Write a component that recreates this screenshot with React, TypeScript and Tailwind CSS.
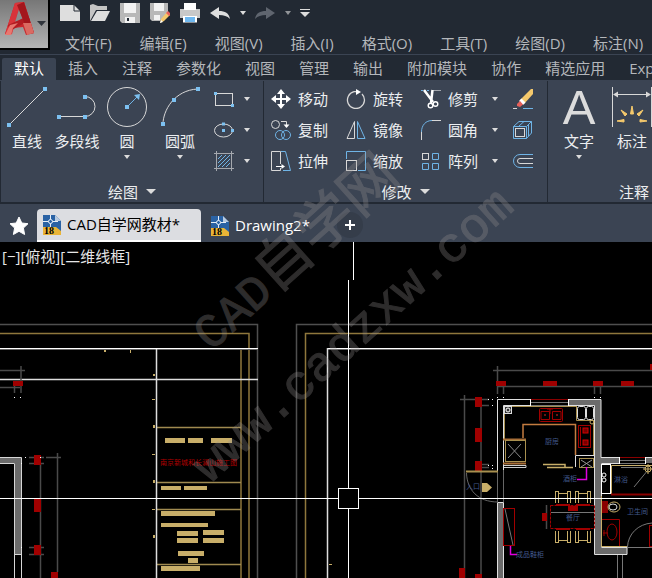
import React from 'react';

const menus = ['文件(F)', '编辑(E)', '视图(V)', '插入(I)', '格式(O)', '工具(T)', '绘图(D)', '标注(N)'];
const ribbonTabs = ['默认', '插入', '注释', '参数化', '视图', '管理', '输出', '附加模块', '协作', '精选应用', 'Express Tools'];

const GRAY = '#d8d8d8';
const BLUE = '#6fb4e6';

interface IconProps {
  size?: 20 | 40;
  children: React.ReactNode;
}

const Icon: React.FC<IconProps> = ({ size = 20, children }) => (
  <svg
    className={size === 40 ? 'w-10 h-10 shrink-0' : 'w-5 h-5 shrink-0'}
    viewBox={size === 40 ? '0 0 40 40' : '0 0 20 20'}
    fill="none"
    stroke={GRAY}
    aria-hidden="true"
  >
    {children}
  </svg>
);

const Caret: React.FC<{ large?: boolean }> = ({ large }) => (
  <svg className={large ? 'w-[10px] h-[5px] shrink-0' : 'w-[6px] h-[4px] shrink-0'} viewBox="0 0 10 6" preserveAspectRatio="none" aria-hidden="true">
    <path d="M0 0H10L5 6Z" fill="#dcdcdc" />
  </svg>
);

// Small square grip used on the drawing icons
const Grip: React.FC<{ x: number; y: number; s?: number }> = ({ x, y, s = 4 }) => (
  <rect x={x - s / 2} y={y - s / 2} width={s} height={s} fill="#7cc0f0" stroke="none" />
);

const icons = {
  line: (
    <Icon size={40}>
      <path d="M2 38L38 2" />
      <Grip x={2} y={38} />
      <Grip x={38} y={2} />
    </Icon>
  ),
  polyline: (
    <Icon size={40}>
      <path d="M2 29.5H28A10 10 0 0 0 28 9.5" />
      <Grip x={2} y={30} />
      <Grip x={28} y={30} />
      <Grip x={28} y={10} />
    </Icon>
  ),
  circle: (
    <Icon size={40}>
      <circle cx="20" cy="20" r="19.5" />
      <path d="M20 20L30 10" stroke={BLUE} />
      <path d="M33 7L32 13L27 8Z" fill="#7cc0f0" stroke="none" />
      <Grip x={20} y={20} />
    </Icon>
  ),
  arc: (
    <Icon size={40}>
      <path d="M3 37C3 24 14 3 38 2" />
      <Grip x={3} y={37} />
      <Grip x={14} y={13} />
      <Grip x={38} y={2} />
    </Icon>
  ),
  rect: (
    <Icon>
      <rect x="1.5" y="4.5" width="17" height="12" />
      <Grip x={1.5} y={4.5} s={3} />
      <Grip x={18.5} y={16.5} s={3} />
    </Icon>
  ),
  ellipse: (
    <Icon>
      <ellipse cx="9.5" cy="10.5" rx="9" ry="6.5" />
      <Grip x={9.5} y={10.5} s={3} />
      <Grip x={9.5} y={4} s={3} />
      <Grip x={18.5} y={10.5} s={3} />
    </Icon>
  ),
  hatch: (
    <Icon>
      <path d="M2.5 0V20M17.5 0V20M0 2.5H20M0 17.5H20" stroke="#a4a8ae" />
      <path d="M4 8L8 4M4 12L12 4M4 16L16 4M8 16L16 8M12 16L16 12" stroke={BLUE} />
    </Icon>
  ),
  move: (
    <Icon>
      <path d="M10 3V17M3 10H17" stroke="#fff" strokeWidth="2" />
      <path d="M10 0L14 5H6ZM10 20L6 15H14ZM0 10L5 6V14ZM20 10L15 14V6Z" fill="#fff" stroke="none" />
    </Icon>
  ),
  rotate: (
    <Icon>
      <path d="M16 5A8.5 8.5 0 1 1 8 2.7H12" strokeWidth="1.3" />
      <path d="M10 0L15 3L10 6Z" fill="#fff" stroke="none" />
    </Icon>
  ),
  trim: (
    <Icon>
      <path d="M0 1.5H8" stroke={BLUE} strokeDasharray="2 1" />
      <path d="M12 1.5H20" stroke="#a4a8ae" />
      <path d="M3 1L12 13M11.500 1L10 14" stroke="#fff" strokeWidth="2.500" />
      <circle cx="9.500" cy="16.500" r="2.3" stroke="#fff" strokeWidth="1.4" />
      <circle cx="14.500" cy="15" r="2.3" stroke="#fff" strokeWidth="1.4" />
    </Icon>
  ),
  copy: (
    <Icon>
      <circle cx="4.5" cy="4.500" r="4" />
      <path d="M10 1.500H15.500V5" />
      <path d="M12.500 4.500H18.500L15.500 8Z" fill="#fff" stroke="none" />
      <circle cx="9" cy="15" r="4.500" stroke={BLUE} />
      <circle cx="15" cy="15" r="4.500" stroke={BLUE} />
    </Icon>
  ),
  mirror: (
    <Icon>
      <path d="M8.500 1.500V18.500H1Z" />
      <path d="M11.500 1.500V18.500H19Z" stroke={BLUE} />
    </Icon>
  ),
  fillet: (
    <Icon>
      <path d="M.5 20V12M11 .5H20" />
      <path d="M.5 12C.5 5 5 .5 11 .5" stroke={BLUE} />
    </Icon>
  ),
  stretch: (
    <Icon>
      <path d="M9.500 13V.5H.5V19.500H9.500V17" />
      <path d="M10 .5H14.500L19.500 19.500H12" stroke={BLUE} />
      <path d="M5 15.500H12" stroke="#fff" />
      <path d="M10.500 13L14 15.500L10.500 18Z" fill="#fff" stroke="none" />
    </Icon>
  ),
  scale: (
    <Icon>
      <path d="M.5 8V.5H19.500V19.500H12" stroke={BLUE} />
      <rect x=".5" y="9.500" width="10" height="10" />
    </Icon>
  ),
  array: (
    <Icon>
      <rect x="1.500" y="2.500" width="6" height="6" />
      <path d="M11.500 2.500H17.500V8.500H11.500ZM1.500 12.500H7.500V18.500H1.500ZM11.500 12.500H17.500V18.500H11.500Z" stroke={BLUE} />
    </Icon>
  ),
  erase: (
    <Icon>
      <path d="M0 19.500H4" />
      <path d="M10 19.500H20" stroke={BLUE} />
      <path d="M18 0H20V5L11 15L7 11Z" fill="#f5c96c" stroke="none" />
      <path d="M8.500 9.500L12.500 13.500L10 16L6 12Z" fill="#fff" stroke="none" />
      <path d="M7 12L10 15.500L7 18L4 17V15Z" fill="#e8605a" stroke="none" />
    </Icon>
  ),
  box: (
    <Icon>
      <path d="M.5 6.500L6 1.500H18.500V13L13.500 18.500V6.500L18.500 1.500M.5 6.500H13.500M.5 6.500V18.500H13.500M11 1.500L6 6M15.500 5V16" stroke={BLUE} />
      <rect x="2.500" y="8.500" width="9" height="8" />
    </Icon>
  ),
  offset: (
    <Icon>
      <path d="M20 3.500H7A6.500 6.500 0 0 0 7 16.500H20" stroke={BLUE} />
      <path d="M20 7.500H7A2.500 2.500 0 0 0 7 12.500H20" />
    </Icon>
  ),
  text: (
    <Icon size={40}>
      <text x="20" y="37" textAnchor="middle" fontSize="49" fontFamily="Liberation Sans, sans-serif" fill="#dcdcdc" stroke="none">A</text>
    </Icon>
  ),
  dimension: (
    <Icon size={40}>
      <path d="M.5 0V40M39.500 0V40M2 7.500H38" />
      <path d="M1 7.500L6 4.500V10.500ZM39 7.500L34 4.500V10.500Z" fill={GRAY} stroke="none" />
      <path d="M18.500 27L20 19L21.500 27ZM13 29L9 23L15 27ZM27 29L31 23L25 27ZM12 35L5 34L12 32.500ZM28 35L35 34L28 32.500Z" fill="#f5c96c" stroke="#f5c96c" />
    </Icon>
  ),
};

const Flyout: React.FC<{ label: string }> = ({ label }) => (
  <button type="button" aria-label={label} className="flex items-center justify-center w-3 h-5">
    <Caret />
  </button>
);

interface BigToolProps {
  label: string;
  icon: React.ReactNode;
  caret?: boolean;
  wide?: boolean;
}

const BigTool: React.FC<BigToolProps> = ({ label, icon, caret, wide }) => (
  <button type="button" className={`flex flex-col items-center shrink-0 pt-[6px] hover:bg-white/5 ${wide ? 'w-[56px]' : 'w-[50px]'}`}>
    {icon}
    <span className="mt-1 leading-5">{label}</span>
    {caret && (
      <span className="flex mt-1">
        <Caret />
      </span>
    )}
  </button>
);

const SmallTool: React.FC<{ label: string; icon: React.ReactNode }> = ({ label, icon }) => (
  <button type="button" className="flex items-center gap-[7px] h-[31px] leading-5 hover:bg-white/5">
    {icon}
    <span>{label}</span>
  </button>
);

const Panel: React.FC<{ title: string; className: string; children: React.ReactNode }> = ({ title, className, children }) => (
  <section aria-label={title} className={`flex flex-col shrink-0 bg-[#3b4453] ${className}`}>
    <div className="flex h-[100px]">{children}</div>
    <button type="button" className="flex items-center justify-center gap-2 h-[21px] leading-5">
      {title}
      <Caret large />
    </button>
  </section>
);

const modifyColumns = [
  [
    { label: '移动', icon: icons.move },
    { label: '复制', icon: icons.copy },
    { label: '拉伸', icon: icons.stretch },
  ],
  [
    { label: '旋转', icon: icons.rotate },
    { label: '镜像', icon: icons.mirror },
    { label: '缩放', icon: icons.scale },
  ],
  [
    { label: '修剪', icon: icons.trim },
    { label: '圆角', icon: icons.fillet },
    { label: '阵列', icon: icons.array },
  ],
];

const AppButton: React.FC = () => (
  <button
    type="button"
    aria-label="AutoCAD"
    className="flex items-center w-[50px] h-[50px] shrink-0 border-r-2 border-b-2 border-black bg-linear-to-b from-[#777] to-[#b4b4b4]"
  >
    <svg className="w-full h-full" viewBox="0 0 48 48" aria-hidden="true">
      <path d="M5 34L15 3L24 2L34 33L26 35L23 27L13 28L11 35Z" fill="#c9262c" />
      <path d="M15 3L24 2L29 18L24 19L19 8L12 34L5 34Z" fill="#d9343a" />
      <path d="M19 9L23 20L15 22Z" fill="#8d8d8d" />
      <path d="M8 25L28 16L30 20L10 31Z" fill="#b21c22" />
      <path d="M24 2L34 33L29 34L17 5Z" fill="#a3161c" />
      <path d="M10 25L18 23L13 28L11 35H5Z" fill="#e8776f" />
      <path d="M23 23L31 23L34 33L27 35Z" fill="#da6a62" />
      <path d="M37 21H46L41.500 26Z" fill="#30343b" />
    </svg>
  </button>
);

const quickTools = [
  {
    label: '新建',
    art: (
      <>
        <path d="M0 2H14L20 8V18H0Z" fill="#dedede" stroke="none" />
        <path d="M14 2V8H20" stroke="#222933" />
      </>
    ),
  },
  {
    label: '打开',
    art: (
      <>
        <path d="M0 18V2L3 1L8 3H17V7H6Z" fill="#c4c4c4" stroke="none" />
        <path d="M1 18L7 8H20L15 18Z" fill="#dedede" stroke="none" />
      </>
    ),
  },
  {
    label: '保存',
    art: (
      <>
        <path d="M0 0H20V20H2L0 18Z" fill="#b8b8b8" stroke="none" />
        <path d="M4 0H16V10H4ZM5 14H15V20H5Z" fill="#f2f2f2" stroke="none" />
        <path d="M7 15H9V18H7Z" fill="#222933" stroke="none" />
      </>
    ),
  },
  {
    label: '另存为',
    art: (
      <>
        <path d="M0 0H18V11L10 18H2L0 16Z" fill="#b8b8b8" stroke="none" />
        <path d="M4 0H14V8H4ZM4 12H10V17H4Z" fill="#f2f2f2" stroke="none" />
        <path d="M10 20L11 16L17 9L20 12L14 18Z" fill="#f5c96c" stroke="none" />
        <path d="M16 10L18 8L21 11L19 13Z" fill="#e8605a" stroke="none" />
        <path d="M10 20L11 17L13 19Z" fill="#fff" stroke="none" />
      </>
    ),
  },
  {
    label: '打印',
    art: (
      <>
        <path d="M4 0H16V7H4Z" fill="#fff" stroke="none" />
        <path d="M0 6H20V15H0Z" fill="#c8c8c8" stroke="none" />
        <path d="M4 4H16V7H4Z" fill="#fff" stroke="none" />
        <path d="M3 13H17V19.500H3Z" fill="#fff" stroke="none" />
        <path d="M5 14H15V19H5Z" fill="#6fb8f0" stroke="none" />
      </>
    ),
  },
  { label: '放弃', art: <path d="M0 10L9 4V8C15 8 19 10 20 16C17 13 14 12 9 12V16Z" fill="#dedede" stroke="none" /> },
];

const QuickAccess: React.FC = () => (
  <div className="flex items-center gap-[10px] h-[32px] pl-[10px] pb-[6px]">
    {quickTools.map((tool) => (
      <button key={tool.label} type="button" aria-label={tool.label}>
        <Icon>{tool.art}</Icon>
      </button>
    ))}
    <button type="button" aria-label="放弃列表" className="w-[5px]">
      <Caret />
    </button>
    <button type="button" aria-label="重做">
      <Icon>
        <path d="M20 10L11 4V8C5 8 1 10 0 16C3 13 6 12 11 12V16Z" fill="#5f656f" stroke="none" />
      </Icon>
    </button>
    <button type="button" aria-label="重做列表" className="w-[5px] opacity-60">
      <Caret />
    </button>
    <button type="button" aria-label="自定义快速访问工具栏" className="flex flex-col items-center gap-[2px] w-[10px]">
      <span className="w-[10px] h-px bg-[#dcdcdc]" />
      <Caret large />
    </button>
  </div>
);

const DwgIcon: React.FC = () => (
  <svg className="w-5 h-5 shrink-0" viewBox="0 0 20 20" aria-hidden="true">
    <path d="M1 0H13L19 6V20H1Z" fill="#2a62a4" />
    <path d="M13 0V6H19Z" fill="#b9cbe0" />
    <path d="M1 12H14L19 16V20H1Z" fill="#eab436" />
    <path d="M8.500 0V12M1 6.500H16" stroke="#e6eef8" />
    <circle cx="8.500" cy="6.500" r="2" fill="#2a62a4" stroke="#e6eef8" />
    <text x="2" y="19" fontSize="10" fontWeight="bold" fontFamily="Liberation Serif, serif" fill="#000">18</text>
  </svg>
);

const FileTabs: React.FC = () => (
  <nav aria-label="文件" className="flex items-end h-[38px] bg-[#3b4453] text-white">
    <button type="button" aria-label="开始" className="flex items-center justify-center w-[37px] h-[33px]">
      <svg className="w-5 h-5" viewBox="0 0 20 20" aria-hidden="true">
        <path d="M10 1L12.800 7L19 7.700L14.400 12L15.600 18.500L10 15.300L4.400 18.500L5.600 12L1 7.700L7.200 7Z" fill="#fff" stroke="#fff" strokeLinejoin="round" />
      </svg>
    </button>
    <button type="button" className="flex items-center gap-[5px] w-[164px] h-[33px] pl-[5px] rounded-t-sm border-b-2 border-white bg-[#dcdde1] text-black">
      <DwgIcon />
      CAD自学网教材*
    </button>
    <button type="button" className="flex items-center gap-[5px] w-[132px] h-[33px] pl-[9px]">
      <DwgIcon />
      Drawing2*
    </button>
    <button type="button" aria-label="新图形" className="flex items-center justify-center w-[26px] h-[26px] mb-1 ml-1 rounded-full bg-[#353d4a]">
      <svg className="w-[10px] h-[10px]" viewBox="0 0 10 10" aria-hidden="true">
        <path d="M5 0V10M0 5H10" stroke="#fff" strokeWidth="2" />
      </svg>
    </button>
  </nav>
);

const titleBlocks = [
  [165, 438, 20, 5], [188, 438, 15, 5], [211, 438, 21, 5],
  [161, 486, 20, 4], [184, 486, 23, 4],
  [161, 511, 54, 5], [161, 523, 47, 4],
  [177, 531, 21, 5], [203, 530, 21, 5], [177, 538, 21, 5], [203, 538, 21, 5],
  [178, 551, 26, 5], [188, 558, 10, 5], [161, 566, 39, 5],
  [153, 374, 2, 2], [152, 399, 3, 1], [153, 425, 2, 3], [152, 454, 3, 1],
  [153, 480, 2, 3], [152, 509, 3, 1], [153, 535, 2, 3], [104, 350, 2, 2], [130, 350, 1, 3], [329, 564, 3, 1],
];

const dimensionMarks = [
  [13, 381, 10, 5], [34, 455, 7, 10], [34, 499, 7, 13], [34, 545, 7, 10], [51, 572, 7, 6],
  [496, 381, 10, 5], [543, 381, 14, 5], [593, 381, 10, 5], [621, 381, 13, 5], [650, 364, 2, 6],
  [475, 397, 7, 10], [475, 428, 7, 14], [475, 461, 7, 10],
  [459, 568, 6, 10], [475, 574, 7, 4], [568, 506, 10, 5], [542, 513, 5, 8],
];

const dots = [
  [14, 397], [20, 397], [25, 457], [21, 463], [40, 457], [21, 547],
  [488, 399], [492, 399], [492, 405], [488, 465], [492, 465], [492, 468], [497, 397], [503, 397], [594, 397], [600, 397],
];

const Chair: React.FC<{ x: number; y: number; flip?: boolean }> = ({ x, y, flip }) => (
  <g transform={flip ? `translate(${x} ${y + 14}) scale(1 -1)` : `translate(${x} ${y})`}>
    <path d="M.5 12V1M3.500 12V1M12.500 12V1M15.500 12V1M0 .5H4M12 .5H16M3 2.500H13" stroke="#c8ae69" />
    <path d="M1 14H15" stroke="#a00000" strokeWidth="2" />
  </g>
);

const Drawing: React.FC = () => (
  <svg className="absolute inset-0 w-full h-full" viewBox="0 242 652 336" preserveAspectRatio="xMinYMin slice" fill="none" aria-hidden="true">
    {/* sheet frames */}
    <path d="M0 324.500H257.500V578M296.500 578V324.500H652" stroke="#4f4f4f" strokeWidth="1.500" />
    <path d="M0 333.500H249V578M241 350V578M305.500 578V333.500H652" stroke="#8f773c" strokeWidth="1.500" />
    <path d="M156 427.500H241M156 482.500H241M156 509.500H241M156 564.500H241" stroke="#a08a50" strokeWidth="1.500" />
    <path d="M0 348.500H258M328 348.500H652" stroke="#fff" />
    <path d="M0 349.500H258M328 349.500H652" stroke="#666" />
    <path d="M0 379.500H258" stroke="#ddd" strokeWidth="1.500" />
    <path d="M156.500 349V578M327.500 348V578" stroke="#ddd" strokeWidth="1.500" />
    {titleBlocks.map(([x, y, w, h]) => (
      <rect key={`${x}-${y}`} x={x} y={y} width={w} height={h} fill="#c8ae69" />
    ))}
    <text x="160" y="465" fontSize="7" fontFamily="Noto Sans CJK SC, sans-serif" fill="#b00000">南京新城和长澜山施工图</text>

    {/* dimension lines */}
    <g stroke="#4a4a4a" strokeWidth="1.500">
      <path d="M0 370.500H25M21 366V393M0 387.500H20M14.500 386V393M40.500 463V578M57.500 453V572M29 457.500H44M29 463.500H44M46 457.500H61M29 547.500H44M29 554.500H44" />
      <path d="M493 370.500H652M497.500 366V394M497 386.500H652M503.500 382V394M594.500 386V394M600.500 386V394" />
      <path d="M464.500 395V578M460 399.500H475M481 405V578M482 399.500H489M482 405.500H489M477 464.500H489M477 467.500H489M546.500 505V529" />
    </g>
    {dimensionMarks.map(([x, y, w, h]) => (
      <rect key={`${x}-${y}`} x={x} y={y} width={w} height={h} fill="#a00000" />
    ))}

    {/* walls */}
    <path d="M0 457H21V554H15V463H0Z" fill="#6b6b6b" />
    <path d="M0 457.500H21.500V578M0 463.500H14.500V578M15 554.500H21" stroke="#d6d6d6" />
    <path d="M568 400H601V554H595V406H568ZM595 548H627V554H595ZM498 503H503V578H498ZM601 458H619V463H601ZM645 458H652V463H645Z" fill="#6b6b6b" />
    <path d="M497.500 471V399.500H601V457.500H652M503.500 470V405.500H530M568 405.500H594.500V554.500H627V547.500H601.500V463.500H619M497.500 578V502.500H503.500V578" stroke="#e0e0e0" />
    <path d="M497.500 471V502M503.500 470V502" stroke="#666" />
    <path d="M530 399.500H568M619 457.500H645" stroke="#8a0000" />
    <path d="M531 402.500H568M531 405.500H568M619 460.500H645M619 463.500H645" stroke="#777" />
    <path d="M530.500 399V406M568.500 399V406M619.500 457V464M645.500 457V464" stroke="#fff" />
    <path d="M617.500 555V578M622.500 555V578" stroke="#777" />

    {/* kitchen */}
    <path d="M504.500 414V439M512 406.500H577M576.500 406V420.500H593.500V455" stroke="#a8904f" />
    <rect x="504.500" y="406.500" width="7" height="7" stroke="#ddd" fill="#333" />
    <circle cx="508" cy="410" r="2" stroke="#fff" />
    <rect x="539.500" y="408.500" width="23" height="13" rx="1" stroke="#a00000" />
    <path d="M541 411.500H549.500V419.500H541ZM552.500 411.500H561V419.500H552.500ZM550 408V414M547 409H553" stroke="#a00000" />
    <path d="M544 415H546M556 415H558" stroke="#d22" />
    <rect x="577.500" y="406.500" width="8" height="13" rx="2" stroke="#ddd" />
    <rect x="586.500" y="406.500" width="7" height="13" rx="2" stroke="#ddd" />
    <circle cx="592" cy="422" r="2" stroke="#c8ae69" />
    <path d="M523 438V424.500H575.500V455" stroke="#c47c40" strokeWidth="1.500" />
    <rect x="578.500" y="425.500" width="12" height="22" stroke="#a00000" />
    <rect x="583" y="428" width="5" height="5" fill="#700" stroke="#d00000" />
    <rect x="583" y="440" width="5" height="5" fill="#700" stroke="#d00000" />
    <path d="M580.500 427V446" stroke="#a00000" />
    <path d="M503 439.500H526M503 463.500H526" stroke="#a86f38" strokeWidth="2" />
    <rect x="505.500" y="440.500" width="20" height="21" stroke="#a8904f" />
    <path d="M508 444L521 458M521 444L508 458" stroke="#888" />
    <path d="M504 465.500H526V467.500H504" stroke="#ccc" />
    <path d="M543 464.500H565V467.500H547M555 467.500H573" stroke="#c8ae69" strokeWidth="1.500" />
    <path d="M575.500 467V455.500H594" stroke="#ddd" />
    <rect x="579.500" y="458.500" width="14" height="9" stroke="#a8904f" />
    <path d="M581 460L592 467M592 460L581 467" stroke="#999" />
    <path d="M577 479.500H586.500V467M510.500 546V554.500H517" stroke="#e000e0" strokeWidth="1.500" />

    {/* entrance */}
    <path d="M466 471.500H498" stroke="#a8904f" strokeWidth="2" />
    <path d="M466.500 473C467 490 478 502 498 502" stroke="#666" />
    <path d="M482 483H487L492 487.500L487 492H482Z" fill="#c8ae69" />
    <rect x="503.500" y="508.500" width="11" height="37" stroke="#a00000" />
    <path d="M505 509L513 545" stroke="#777" />

    {/* dining table */}
    <Chair x={555} y={491} />
    <Chair x={575} y={491} />
    <Chair x={555} y={529} flip />
    <Chair x={575} y={529} flip />
    <rect x="550.500" y="505.500" width="44" height="23" stroke="#a00000" strokeDasharray="3 1" />
    <path d="M551 512.500H594" stroke="#777" />

    {/* bathroom */}
    <rect x="601.500" y="464.500" width="9" height="29" stroke="#fff" />
    <circle cx="604" cy="475" r="2" stroke="#fff" />
    <circle cx="604" cy="480" r="2" stroke="#fff" />
    <path d="M611.500 494V465.500H652M601.500 496V546.500H627" stroke="#c8ae69" />
    <path d="M611 494.500H652" stroke="#8a0000" strokeWidth="2" />
    <path d="M634 487L648 470M621 467.500H646" stroke="#777" />
    <circle cx="648" cy="469" r="3" stroke="#c8ae69" />
    <path d="M643 469H652M648 464V474" stroke="#c8ae69" />
    <rect x="602" y="501" width="6" height="12" fill="#8a0000" />
    <ellipse cx="614" cy="507" rx="6" ry="5" stroke="#c8ae69" />
    <ellipse cx="613" cy="507" rx="4" ry="3" stroke="#ddd" />
    <path d="M602 519.500H619.500V546M603 533H608M604 530V536" stroke="#a00000" />
    <ellipse cx="612" cy="532" rx="5" ry="8" stroke="#a00000" />
    <path d="M627.500 547C628 534 638 524 652 523" stroke="#777" />
    <path d="M627.500 547V554M627 547.500H652" stroke="#777" />
    <rect x="649.500" y="525.500" width="3" height="21" stroke="#a00000" />

    <g fontSize="7" fontFamily="Noto Sans CJK SC, sans-serif" fill="#41588c">
      <text x="545" y="444">厨房</text>
      <text x="466" y="489">入口</text>
      <text x="563" y="481">酒柜</text>
      <text x="614" y="482">淋浴</text>
      <text x="627" y="514">卫生间</text>
      <text x="566" y="520">餐厅</text>
      <text x="516" y="557">成品鞋柜</text>
    </g>
    {dots.map(([x, y]) => (
      <rect key={`${x}-${y}`} x={x} y={y} width="1" height="1" fill="#fff" />
    ))}

    {/* crosshair cursor */}
    <path d="M0 498.500H338M359 498.500H652M348.500 280V488M348.500 509V578M353.500 242V280" stroke="#fff" />
    <rect x="338.500" y="488.500" width="20" height="20" stroke="#fff" />
  </svg>
);

const Watermark: React.FC = () => (
  <svg className="absolute top-0 left-0 w-[652px] h-[578px] pointer-events-none" viewBox="0 0 652 578" fill="#969191" stroke="#969191" opacity="0.3">
    <g fontFamily="Liberation Mono, Noto Sans CJK SC, monospace">
      <text transform="translate(211 352) rotate(-42)" fontSize="48">
        CAD<tspan fontSize="57">自学网</tspan>
      </text>
      <text transform="translate(210 484) rotate(-42)" fontSize="49">www.cadzxw.com</text>
    </g>
  </svg>
);

export default function App() {
  return (
    <div className="relative flex flex-col min-h-screen overflow-hidden bg-[#222933] font-['Open_Sans','Noto_Sans_CJK_SC',sans-serif] text-[15px] whitespace-nowrap text-[#eceef0]">
      <header className="flex h-[55px] border-b border-[#3b4453]">
        <AppButton />
        <div className="flex-1 min-w-0">
          <QuickAccess />
          <nav aria-label="菜单" className="flex gap-7 h-[22px] pl-[15px] leading-5 text-[#b4b7bb]">
            {menus.map((menu) => (
              <button key={menu} type="button" className="shrink-0 hover:text-white">{menu}</button>
            ))}
          </nav>
        </div>
      </header>

      <nav aria-label="功能区" className="flex items-end h-[25px] pl-[2px] leading-5">
        {ribbonTabs.map((tab, i) => (
          <button
            key={tab}
            type="button"
            className={i === 0 ? 'shrink-0 h-[22px] px-3 pb-[2px] rounded-t-xs bg-[#3b4453] text-white' : 'shrink-0 h-[22px] px-3 pb-[2px] text-[#b4b7bb] hover:text-white'}
          >
            {tab}
          </button>
        ))}
      </nav>

      <div className="flex gap-px h-[124px] pl-px pb-[2px] overflow-hidden border-t border-[#3b4453]">
        <Panel title="绘图" className="w-[262px]">
          <div className="flex pl-px">
            <BigTool label="直线" icon={icons.line} />
            <BigTool label="多段线" icon={icons.polyline} />
            <BigTool label="圆" icon={icons.circle} caret />
            <BigTool label="圆弧" icon={icons.arc} caret wide />
          </div>
          <div className="flex flex-col pt-[2px] pl-[6px]">
            {[{ label: '矩形', icon: icons.rect }, { label: '椭圆', icon: icons.ellipse }, { label: '图案填充', icon: icons.hatch }].map((tool) => (
              <div key={tool.label} className="flex items-center gap-[7px] h-[31px]">
                <button type="button" aria-label={tool.label}>{tool.icon}</button>
                <Flyout label={`${tool.label}选项`} />
              </div>
            ))}
          </div>
        </Panel>

        <Panel title="修改" className="w-[283px]">
          <div className="flex gap-[18px] pt-[2px] pl-[7px]">
            {modifyColumns.map((column) => (
              <div key={column[0].label} className="flex flex-col">
                {column.map((tool) => (
                  <SmallTool key={tool.label} label={tool.label} icon={tool.icon} />
                ))}
              </div>
            ))}
          </div>
          <div className="flex flex-col justify-start gap-[11px] pt-[8px] pl-[11px]">
            <Flyout label="修剪选项" />
            <Flyout label="圆角选项" />
            <Flyout label="阵列选项" />
          </div>
          <div className="flex flex-col gap-[11px] pt-[8px] pl-3">
            <button type="button" aria-label="删除">{icons.erase}</button>
            <button type="button" aria-label="分解">{icons.box}</button>
            <button type="button" aria-label="偏移">{icons.offset}</button>
          </div>
        </Panel>

        <Panel title="注释" className="w-[190px] grow">
          <div className="flex gap-[3px] pl-[6px]">
            <BigTool label="文字" icon={icons.text} caret />
            <BigTool label="标注" icon={icons.dimension} />
          </div>
        </Panel>
      </div>

      <FileTabs />

      <main className="relative flex-1 min-h-[336px] bg-black overflow-hidden">
        <Drawing />
        <div className="relative flex pt-[2px] pl-[2px] leading-6 text-[#e6e6e6]">
          <button type="button">[−]</button>
          <button type="button">[俯视]</button>
          <button type="button">[二维线框]</button>
        </div>
      </main>

      <Watermark />
    </div>
  );
}
